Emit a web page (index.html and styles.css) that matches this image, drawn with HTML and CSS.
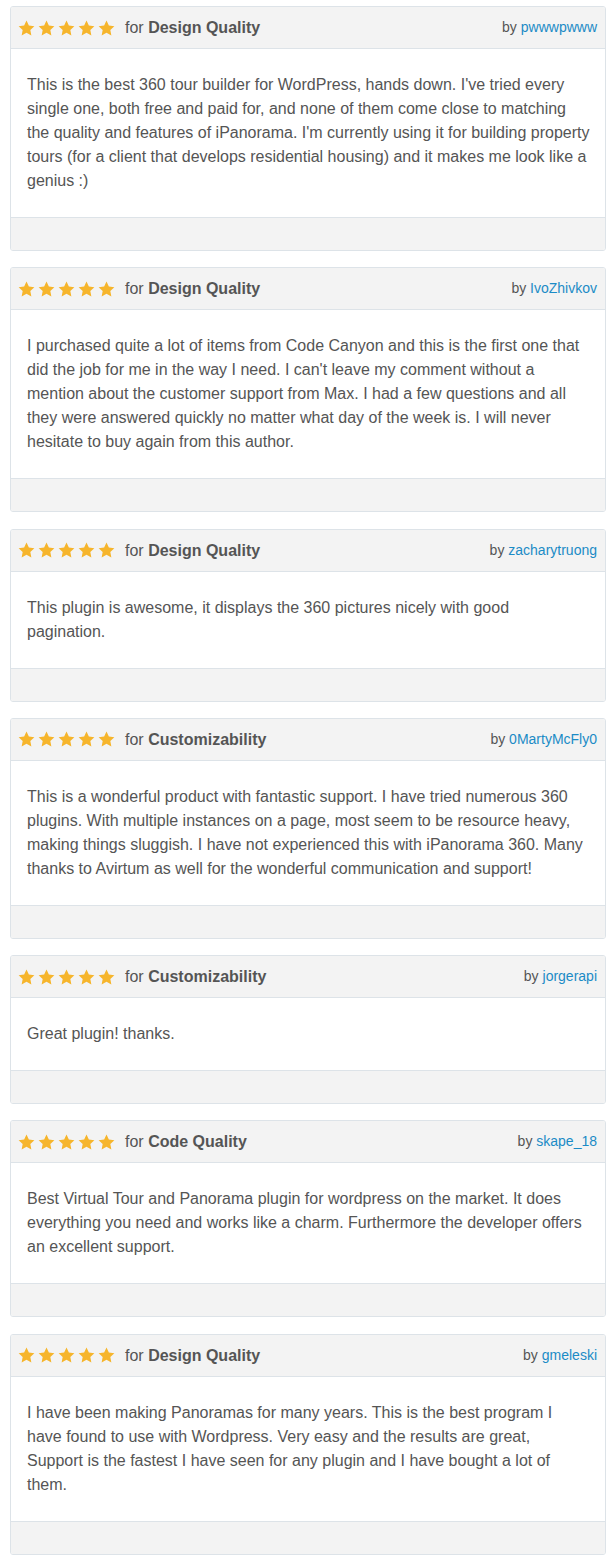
FILE: index.html
```html
<!DOCTYPE html>
<html lang="en">
<head>
<meta charset="utf-8">
<title>Reviews</title>
<link rel="stylesheet" href="styles.css">
</head>
<body>
<svg class="defs" width="0" height="0" aria-hidden="true">
  <defs>
    <symbol id="star" viewBox="0 0 24 23">
      <path d="M12 0.6l3.4 7.3 7.9 1-5.8 5.5 1.5 7.9L12 18.4l-7 3.9 1.5-7.9L0.7 8.9l7.9-1z"/>
    </symbol>
  </defs>
</svg>
<div class="reviews">

  <div class="card">
    <div class="card-head">
      <div class="rating">
        <span class="stars"><svg class="star"><use href="#star"/></svg><svg class="star"><use href="#star"/></svg><svg class="star"><use href="#star"/></svg><svg class="star"><use href="#star"/></svg><svg class="star"><use href="#star"/></svg></span>
        <span class="for">for <b>Design Quality</b></span>
      </div>
      <div class="author">by <a href="#">pwwwpwww</a></div>
    </div>
    <div class="card-body">This is the best 360 tour builder for WordPress, hands down. I've tried every<br>single one, both free and paid for, and none of them come close to matching<br>the quality and features of iPanorama. I'm currently using it for building property<br>tours (for a client that develops residential housing) and it makes me look like a<br>genius :)</div>
    <div class="card-foot"></div>
  </div>

  <div class="card">
    <div class="card-head">
      <div class="rating">
        <span class="stars"><svg class="star"><use href="#star"/></svg><svg class="star"><use href="#star"/></svg><svg class="star"><use href="#star"/></svg><svg class="star"><use href="#star"/></svg><svg class="star"><use href="#star"/></svg></span>
        <span class="for">for <b>Design Quality</b></span>
      </div>
      <div class="author">by <a href="#">IvoZhivkov</a></div>
    </div>
    <div class="card-body">I purchased quite a lot of items from Code Canyon and this is the first one that<br>did the job for me in the way I need. I can't leave my comment without a<br>mention about the customer support from Max. I had a few questions and all<br>they were answered quickly no matter what day of the week is. I will never<br>hesitate to buy again from this author.</div>
    <div class="card-foot"></div>
  </div>

  <div class="card">
    <div class="card-head">
      <div class="rating">
        <span class="stars"><svg class="star"><use href="#star"/></svg><svg class="star"><use href="#star"/></svg><svg class="star"><use href="#star"/></svg><svg class="star"><use href="#star"/></svg><svg class="star"><use href="#star"/></svg></span>
        <span class="for">for <b>Design Quality</b></span>
      </div>
      <div class="author">by <a href="#">zacharytruong</a></div>
    </div>
    <div class="card-body">This plugin is awesome, it displays the 360 pictures nicely with good<br>pagination.</div>
    <div class="card-foot"></div>
  </div>

  <div class="card">
    <div class="card-head">
      <div class="rating">
        <span class="stars"><svg class="star"><use href="#star"/></svg><svg class="star"><use href="#star"/></svg><svg class="star"><use href="#star"/></svg><svg class="star"><use href="#star"/></svg><svg class="star"><use href="#star"/></svg></span>
        <span class="for">for <b>Customizability</b></span>
      </div>
      <div class="author">by <a href="#">0MartyMcFly0</a></div>
    </div>
    <div class="card-body">This is a wonderful product with fantastic support. I have tried numerous 360<br>plugins. With multiple instances on a page, most seem to be resource heavy,<br>making things sluggish. I have not experienced this with iPanorama 360. Many<br>thanks to Avirtum as well for the wonderful communication and support!</div>
    <div class="card-foot"></div>
  </div>

  <div class="card">
    <div class="card-head">
      <div class="rating">
        <span class="stars"><svg class="star"><use href="#star"/></svg><svg class="star"><use href="#star"/></svg><svg class="star"><use href="#star"/></svg><svg class="star"><use href="#star"/></svg><svg class="star"><use href="#star"/></svg></span>
        <span class="for">for <b>Customizability</b></span>
      </div>
      <div class="author">by <a href="#">jorgerapi</a></div>
    </div>
    <div class="card-body">Great plugin! thanks.</div>
    <div class="card-foot"></div>
  </div>

  <div class="card">
    <div class="card-head">
      <div class="rating">
        <span class="stars"><svg class="star"><use href="#star"/></svg><svg class="star"><use href="#star"/></svg><svg class="star"><use href="#star"/></svg><svg class="star"><use href="#star"/></svg><svg class="star"><use href="#star"/></svg></span>
        <span class="for">for <b>Code Quality</b></span>
      </div>
      <div class="author">by <a href="#">skape_18</a></div>
    </div>
    <div class="card-body">Best Virtual Tour and Panorama plugin for wordpress on the market. It does<br>everything you need and works like a charm. Furthermore the developer offers<br>an excellent support.</div>
    <div class="card-foot"></div>
  </div>

  <div class="card">
    <div class="card-head">
      <div class="rating">
        <span class="stars"><svg class="star"><use href="#star"/></svg><svg class="star"><use href="#star"/></svg><svg class="star"><use href="#star"/></svg><svg class="star"><use href="#star"/></svg><svg class="star"><use href="#star"/></svg></span>
        <span class="for">for <b>Design Quality</b></span>
      </div>
      <div class="author">by <a href="#">gmeleski</a></div>
    </div>
    <div class="card-body">I have been making Panoramas for many years. This is the best program I<br>have found to use with Wordpress. Very easy and the results are great,<br>Support is the fastest I have seen for any plugin and I have bought a lot of<br>them.</div>
    <div class="card-foot"></div>
  </div>

</div>
</body>
</html>
```

FILE: styles.css
```css
html, body {
  margin: 0;
  padding: 0;
  background: #ffffff;
}

body {
  font-family: "Liberation Sans", Arial, sans-serif;
  color: #555555;
}

.defs {
  position: absolute;
  width: 0;
  height: 0;
  overflow: hidden;
}

.reviews {
  padding: 6px 10px 6px 10px;
  display: flex;
  flex-direction: column;
  gap: 16.3px;
}

.card {
  border: 1px solid #dde3e8;
  border-radius: 3px;
  background: #ffffff;
  overflow: hidden;
}

.card-head {
  display: flex;
  justify-content: space-between;
  align-items: center;
  background: #f3f3f3;
  border-bottom: 1px solid #dde3e8;
  padding: 8px 8px 8px 7px;
  line-height: 25px;
}

.rating {
  display: flex;
  align-items: center;
}

.stars {
  display: flex;
  gap: 3px;
  margin-right: 10px;
}

.star {
  width: 17px;
  height: 16px;
  fill: #f6b52c;
  display: block;
}

.for {
  font-size: 16px;
  color: #555555;
}

.for b {
  font-weight: bold;
}

.author {
  font-size: 14px;
  color: #555555;
}

.author a {
  color: #1b8bc6;
  text-decoration: none;
}

.card-body {
  padding: 24px 4px 24px 16px;
  font-size: 16px;
  line-height: 24px;
  color: #555555;
}

.card-foot {
  background: #f3f3f3;
  border-top: 1px solid #dde3e8;
  height: 32px;
}
```
